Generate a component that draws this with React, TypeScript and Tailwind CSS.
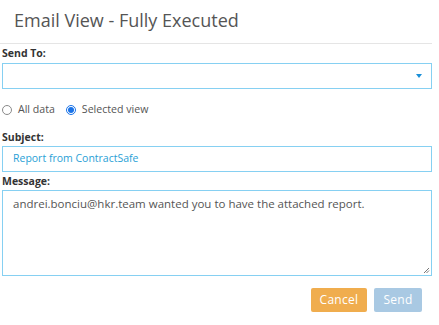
const font = { fontFamily: '"Open Sans", "Liberation Sans", sans-serif' }

const Radio = ({ checked, label }: { checked?: boolean; label: string }) => (
  <label className="flex items-center gap-[6px]">
    <span
      className={
        checked
          ? "w-[10px] h-[10px] rounded-full border border-[#1a73e8] flex items-center justify-center"
          : "w-[10px] h-[10px] rounded-full border border-[#8a8a8a]"
      }
    >
      {checked && <span className="w-[6px] h-[6px] rounded-full bg-[#1a73e8]" />}
    </span>
    <span>{label}</span>
  </label>
)

const App = () => {
  return (
    <div className="w-[439px] h-[325px] bg-white text-[#555] text-[11px]" style={font}>
      <div className="h-[44px] border-b border-[#e5e5e5] w-[432px] pl-[14px] pt-[6px]">
        <h1 className="text-[18px] leading-[28px] text-[#555]">Email View - Fully Executed</h1>
      </div>
      <div className="w-[432px] pl-[2px]">
        <div className="font-bold text-[#333] text-[10.5px] leading-[19px]">Send To:</div>
        <div className="h-[26px] border border-[#86d0f2] flex items-center justify-end pr-[9px]">
          <span className="w-0 h-0 border-l-[3.5px] border-r-[3.5px] border-t-[4px] border-l-transparent border-r-transparent border-t-[#1a8fd8]" />
        </div>
        <div className="flex items-center gap-[11px] h-[20px] mt-[11px] text-[10.6px]">
          <Radio label="All data" />
          <Radio checked label="Selected view" />
        </div>
        <div className="font-bold text-[#333] text-[10.5px] leading-[17px] mt-[9px]">Subject:</div>
        <div className="h-[26px] border border-[#86d0f2] flex items-center pl-[10px] text-[#2a9fd6] text-[10.5px]">
          Report from ContractSafe
        </div>
        <div className="font-bold text-[#333] text-[10.5px] leading-[18px]">Message:</div>
        <div className="h-[86px] border border-[#86d0f2] pl-[10px] pt-[4px] relative text-[11.5px]">
          andrei.bonciu@hkr.team wanted you to have the attached report.
          <svg className="absolute right-[1px] bottom-[1px]" width="7" height="7" viewBox="0 0 7 7">
            <path d="M6 1 L1 6 M6 3.5 L3.5 6" stroke="#777" strokeWidth="1" />
          </svg>
        </div>
        <div className="flex justify-end gap-[7px] pr-[10px] mt-[12px]">
          <button className="w-[56px] h-[24px] rounded-[2px] bg-[#f0ad4e] text-white text-[12px] tracking-[0.3px]">Cancel</button>
          <button className="w-[48px] h-[24px] rounded-[2px] bg-[#a9c9e3] text-white text-[12px] tracking-[0.3px]">Send</button>
        </div>
      </div>
    </div>
  )
}

export default App
